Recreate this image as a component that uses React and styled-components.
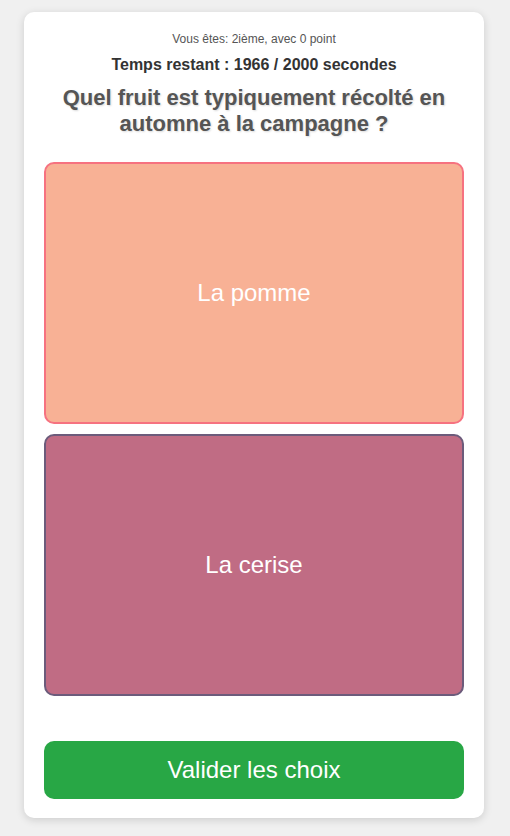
import React from 'react'
import styled, { createGlobalStyle } from 'styled-components'

const GlobalStyle = createGlobalStyle`
  html, body {
    margin: 0;
    padding: 0;
    background: #f0f0f0;
    font-family: "Liberation Sans", Arial, sans-serif;
  }
`

const Page = styled.div`
  display: flex;
  justify-content: center;
  padding: 12px 26px 18px 24px;
`

const Card = styled.div`
  width: 460px;
  box-sizing: border-box;
  background: #fff;
  border-radius: 10px;
  box-shadow: 0 2px 8px rgba(0, 0, 0, 0.15);
  padding: 20px 20px 19px;
  display: flex;
  flex-direction: column;
  align-items: stretch;
  text-align: center;
`

const Rank = styled.div`
  font-size: 12px;
  line-height: 14px;
  color: #555;
`

const Timer = styled.div`
  margin-top: 10px;
  font-size: 16px;
  line-height: 18px;
  font-weight: bold;
  color: #333;
`

const Question = styled.h2`
  margin: 11px 0 25px;
  font-size: 22px;
  line-height: 26px;
  font-weight: bold;
  color: #555;
  text-shadow: 1px 1px 2px rgba(0, 0, 0, 0.15);
`

const Answers = styled.div`
  display: flex;
  flex-direction: column;
  gap: 10px;
`

const Answer = styled.div`
  height: 262px;
  box-sizing: border-box;
  border: 2px solid ${p => p.border};
  background: ${p => p.bg};
  border-radius: 10px;
  display: flex;
  align-items: center;
  justify-content: center;
  color: #fff;
  font-size: 24px;
  cursor: pointer;
`

const Submit = styled.button`
  margin-top: 45px;
  height: 58px;
  border: none;
  border-radius: 10px;
  background: #28a745;
  color: #fff;
  font-family: inherit;
  font-size: 24px;
  cursor: pointer;
`

const answers = [
  { label: 'La pomme', bg: '#f8b195', border: '#f67280' },
  { label: 'La cerise', bg: '#c06c84', border: '#6c5b7b' },
]

export default function App () {
  return (
    <Page>
      <GlobalStyle />
      <Card>
        <Rank>Vous êtes: 2ième, avec 0 point</Rank>
        <Timer>Temps restant : 1966 / 2000 secondes</Timer>
        <Question>Quel fruit est typiquement récolté en automne à la campagne ?</Question>
        <Answers>
          {answers.map(a => (
            <Answer key={a.label} bg={a.bg} border={a.border}>{a.label}</Answer>
          ))}
        </Answers>
        <Submit type="button">Valider les choix</Submit>
      </Card>
    </Page>
  )
}
